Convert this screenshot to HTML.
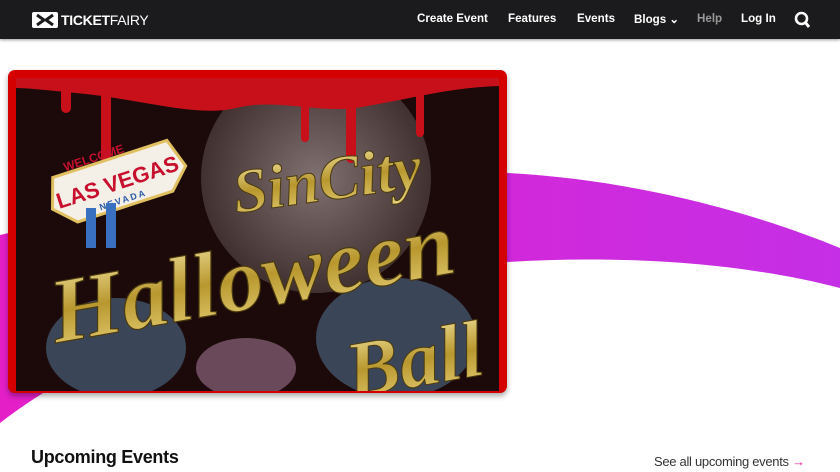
<!DOCTYPE html>
<html><head><meta charset="utf-8"><style>
*{margin:0;padding:0;box-sizing:border-box}
body{width:840px;height:472px;overflow:hidden;background:#fff;font-family:"Liberation Sans",sans-serif;position:relative}
.nav{position:absolute;left:0;top:0;width:840px;height:39px;background:#1b1a1c;box-shadow:0 1px 3px rgba(0,0,0,.4);z-index:5}
.logo{position:absolute;left:32px;top:12px;display:flex;align-items:center;color:#fff;font-size:14px;letter-spacing:-0.3px}
.logo b{font-weight:bold}
.nav a{position:absolute;top:12px;color:#fff;font-size:11.6px;font-weight:bold;text-decoration:none}
.bg{position:absolute;left:0;top:0}
.card{position:absolute;left:8px;top:70px;width:499px;height:323px;background:#d40000;border-radius:7px;box-shadow:0 3px 6px rgba(0,0,0,.35);z-index:3}
.card svg{position:absolute;left:8px;top:8px}
h2{position:absolute;left:31px;top:447px;font-size:18px;font-weight:bold;color:#111;letter-spacing:-0.3px}
.see{position:absolute;left:654px;top:454px;font-size:13px;color:#333;letter-spacing:-0.3px}
.see span{color:#e0209a;font-weight:bold}
</style></head><body>
<svg class="bg" width="840" height="472">
<defs><linearGradient id="g" x1="0" x2="1"><stop offset="0" stop-color="#e41fc8"/><stop offset="1" stop-color="#c52fe6"/></linearGradient></defs>
<path d="M0,235 C150,200 350,165 507,173 C640,180 760,215 840,248 L840,288 C740,262 620,255 507,262 C300,280 120,330 0,423 Z" fill="url(#g)"/>
</svg>
<div class="nav">
<div class="logo"><svg width="26" height="16" viewBox="0 0 26 16"><rect x="0" y="0" width="26" height="16" rx="2" fill="#fff"/><path d="M5,3 L12,8 L5,13 M21,3 L14,8 L21,13" stroke="#1b1a1c" stroke-width="3" fill="none"/></svg><span style="margin-left:3px"><b>TICKET</b>FAIRY</span></div>
<a style="left:417px">Create Event</a>
<a style="left:508px">Features</a>
<a style="left:577px">Events</a>
<a style="left:634px">Blogs ⌄</a>
<a style="left:697px;color:#999">Help</a>
<a style="left:741px">Log In</a>
<svg style="position:absolute;left:794px;top:11px" width="17" height="18"><circle cx="7.5" cy="7.5" r="5.5" stroke="#fff" stroke-width="2.6" fill="none"/><path d="M11,11 L15,16" stroke="#fff" stroke-width="3"/></svg>
</div>
<div class="card"><svg width="483" height="313" viewBox="0 0 483 313">
<defs><linearGradient id="gold" x1="0" y1="0" x2="0" y2="1"><stop offset="0" stop-color="#f3e4a0"/><stop offset=".5" stop-color="#b8972e"/><stop offset="1" stop-color="#e8d27a"/></linearGradient>
<radialGradient id="moon"><stop offset="0" stop-color="#9a8a8a"/><stop offset="1" stop-color="#4a3a3a"/></radialGradient></defs>
<rect width="483" height="313" fill="#1c0a0a"/>
<circle cx="300" cy="100" r="115" fill="url(#moon)" opacity=".8"/>
<path d="M0,0 H483 V8 C430,10 400,20 340,30 C300,35 260,20 220,30 C180,40 120,20 60,15 C30,12 10,10 0,10 Z" fill="#c8101a"/>
<path d="M45,0 v30 a5,5 0 0 0 10,0 v-30 Z M85,0 v80 a5,5 0 0 0 10,0 v-80 Z M285,0 v60 a4,4 0 0 0 8,0 v-60 Z M330,0 v80 a5,5 0 0 0 10,0 v-80 Z M400,0 v55 a4,4 0 0 0 8,0 v-55 Z" fill="#c8101a"/>
<ellipse cx="380" cy="260" rx="80" ry="60" fill="#3a4658"/>
<ellipse cx="100" cy="270" rx="70" ry="50" fill="#3a4658"/>
<ellipse cx="230" cy="290" rx="50" ry="30" fill="#6a4a5a"/>
<g transform="rotate(-18 100 100)"><path d="M40,80 L160,80 L170,110 L150,130 L50,130 L30,110 Z" fill="#f4f0e8" stroke="#e0c060" stroke-width="3"/>
<text x="100" y="112" text-anchor="middle" font-family="Liberation Sans" font-weight="bold" font-size="22" fill="#c8102e">LAS VEGAS</text>
<text x="100" y="126" text-anchor="middle" font-family="Liberation Sans" font-weight="bold" font-size="9" fill="#2a5aa8" letter-spacing="2">NEVADA</text>
<text x="85" y="78" text-anchor="middle" font-family="Liberation Sans" font-weight="bold" font-size="12" fill="#c8102e">WELCOME</text></g>
<rect x="70" y="130" width="10" height="40" fill="#3a70c0"/><rect x="90" y="125" width="10" height="45" fill="#3a70c0"/>
<text x="220" y="135" font-family="Liberation Serif" font-style="italic" font-weight="bold" font-size="62" fill="url(#gold)" stroke="#4a3a10" stroke-width="1" transform="rotate(-8 220 135)">SinCity</text>
<text x="40" y="265" font-family="Liberation Serif" font-style="italic" font-weight="bold" font-size="92" fill="url(#gold)" stroke="#4a3a10" stroke-width="1.2" transform="rotate(-10 40 265)">Halloween</text>
<text x="335" y="320" font-family="Liberation Serif" font-style="italic" font-weight="bold" font-size="80" fill="url(#gold)" stroke="#4a3a10" stroke-width="1" transform="rotate(-10 335 320)">Ball</text>
</svg></div>
<h2>Upcoming Events</h2>
<div class="see">See all upcoming events <span>→</span></div>
</body></html>
